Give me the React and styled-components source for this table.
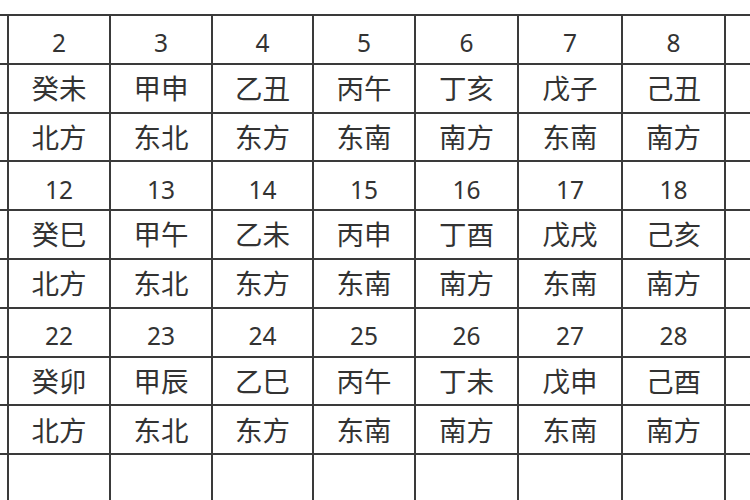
import React from "react";
import styled, { createGlobalStyle } from "styled-components";

const GlobalStyle = createGlobalStyle`
  html, body {
    margin: 0;
    padding: 0;
    background: #ffffff;
  }
`;

const Page = styled.div`
  width: 750px;
  height: 500px;
  overflow: hidden;
  background: #ffffff;
  padding-top: 14px;
  box-sizing: border-box;
`;

const Sheet = styled.table`
  border-collapse: collapse;
  table-layout: fixed;
  width: ${(p) => p.$w}px;
  margin-left: -95px;
  color: #333333;
`;

const Col = styled.col`
  width: ${(p) => p.$w}px;
`;

const Row = styled.tr`
  height: 48.8px;
`;

const Cell = styled.td`
  border: 2px solid #3a3a3a;
  padding: ${(p) => (p.$num ? "8px 0 0" : "0 0 1px")};
  text-align: center;
  vertical-align: middle;
  white-space: nowrap;
  overflow: hidden;
  font-family: ${(p) =>
    p.$num
      ? '"Noto Sans", "Liberation Sans", sans-serif'
      : '"Noto Sans CJK SC", "Noto Sans", sans-serif'};
  font-size: ${(p) => (p.$num ? "24.5px" : "27.5px")};
  line-height: 1;
`;

const weeks = [
  {
    start: 1,
    ganzhi: ["壬午", "癸未", "甲申", "乙丑", "丙午", "丁亥", "戊子", "己丑", "庚寅"],
  },
  {
    start: 11,
    ganzhi: ["壬辰", "癸巳", "甲午", "乙未", "丙申", "丁酉", "戊戌", "己亥", "庚子"],
  },
  {
    start: 21,
    ganzhi: ["壬寅", "癸卯", "甲辰", "乙巳", "丙午", "丁未", "戊申", "己酉", "庚戌"],
  },
];

const directions = ["西北", "北方", "东北", "东方", "东南", "南方", "东南", "南方", "西南"];

// column widths as measured on the sheet, first and last are cut by the viewport
const widths = [102, 102, 102, 101, 102, 103, 104, 103, 104];
const total = widths.reduce((a, b) => a + b, 0);

function App() {
  return (
    <Page>
      <GlobalStyle />
      <Sheet $w={total}>
        <colgroup>
          {widths.map((w, i) => (
            <Col key={i} $w={w} />
          ))}
        </colgroup>
        <tbody>
          {weeks.map((week) => (
            <React.Fragment key={week.start}>
              <Row>
                {week.ganzhi.map((_, i) => (
                  <Cell key={i} $num>
                    {week.start + i}
                  </Cell>
                ))}
              </Row>
              <Row>
                {week.ganzhi.map((g, i) => (
                  <Cell key={i}>{g}</Cell>
                ))}
              </Row>
              <Row>
                {directions.map((d, i) => (
                  <Cell key={i}>{d}</Cell>
                ))}
              </Row>
            </React.Fragment>
          ))}
          <Row>
            {widths.map((_, i) => (
              <Cell key={i} />
            ))}
          </Row>
        </tbody>
      </Sheet>
    </Page>
  );
}

export default App;
